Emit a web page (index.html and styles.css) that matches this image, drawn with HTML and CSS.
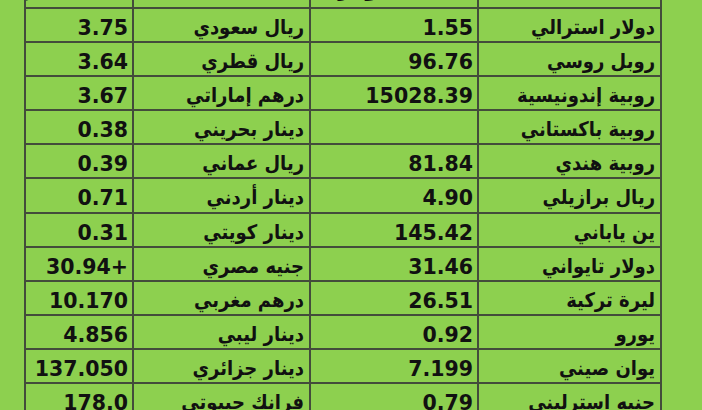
FILE: index.html
```html
<!DOCTYPE html>
<html lang="ar" dir="rtl">
<head>
<meta charset="utf-8">
<title>أسعار العملات</title>
<link rel="stylesheet" href="styles.css">
</head>
<body>
<div class="rates">
<div class="cell name head"></div><div class="cell val head">مقابل الدولار</div><div class="cell name head"></div><div class="cell val head">مقابل الدولار</div>
<div class="cell name">دولار استرالي</div><div class="cell val">1.55</div><div class="cell name">ريال سعودي</div><div class="cell val">3.75</div>
<div class="cell name">روبل روسي</div><div class="cell val">96.76</div><div class="cell name">ريال قطري</div><div class="cell val">3.64</div>
<div class="cell name">روبية إندونيسية</div><div class="cell val">15028.39</div><div class="cell name">درهم إماراتي</div><div class="cell val">3.67</div>
<div class="cell name">روبية باكستاني</div><div class="cell val"></div><div class="cell name">دينار بحريني</div><div class="cell val">0.38</div>
<div class="cell name">روبية هندي</div><div class="cell val">81.84</div><div class="cell name">ريال عماني</div><div class="cell val">0.39</div>
<div class="cell name">ريال برازيلي</div><div class="cell val">4.90</div><div class="cell name">دينار أردني</div><div class="cell val">0.71</div>
<div class="cell name">ين ياباني</div><div class="cell val">145.42</div><div class="cell name">دينار كويتي</div><div class="cell val">0.31</div>
<div class="cell name">دولار تايواني</div><div class="cell val">31.46</div><div class="cell name">جنيه مصري</div><div class="cell val">+30.94</div>
<div class="cell name">ليرة تركية</div><div class="cell val">26.51</div><div class="cell name">درهم مغربي</div><div class="cell val">10.170</div>
<div class="cell name">يورو</div><div class="cell val">0.92</div><div class="cell name">دينار ليبي</div><div class="cell val">4.856</div>
<div class="cell name">يوان صيني</div><div class="cell val">7.199</div><div class="cell name">دينار جزائري</div><div class="cell val">137.050</div>
<div class="cell name">جنيه استرليني</div><div class="cell val">0.79</div><div class="cell name">فرانك جيبوتي</div><div class="cell val">178.0</div>
</div>
</body>
</html>
```

FILE: styles.css
```css
html, body {
  margin: 0;
  padding: 0;
}
body {
  width: 702px;
  height: 410px;
  overflow: hidden;
  background: #8dd04f;
  font-family: "DejaVu Sans", "Liberation Sans", sans-serif;
  color: #111;
}
.rates {
  display: grid;
  grid-template-columns: 181px 166px 175px 106px;
  grid-auto-rows: 32.1px;
  gap: 2px;
  padding: 2px;
  width: 634px;
  margin: -27.1px auto 0 24px;
  background: #434c3b;
}
.cell {
  background: #8dd04f;
  text-align: right;
  white-space: nowrap;
  overflow: hidden;
  padding: 6px 5px 0 4px;
  line-height: 26px;
}
.name {
  font-family: "DejaVu Sans Condensed", "DejaVu Sans", sans-serif;
  font-stretch: condensed;
  font-size: 20px;
  font-weight: bold;
  padding-top: 5px;
}
.val {
  font-size: 20.5px;
  font-weight: bold;
  padding-right: 4px;
}
.cell.head {
  padding-top: 2px;
  line-height: 24px;
}
```
